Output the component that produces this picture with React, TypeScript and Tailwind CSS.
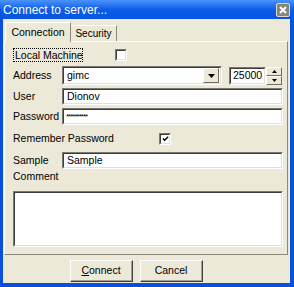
const FONT = { fontFamily: '"Liberation Sans", Arial, sans-serif' };

function Sunken({ className = '', children }: { className?: string; children?: React.ReactNode }) {
  return (
    <div className={`border-t border-l border-[#7a7870] border-b border-r border-b-white border-r-white ${className}`}>
      <div className="w-full h-full bg-white border-t border-l border-[#3c3c38] border-b border-r border-b-[#e4e1d4] border-r-[#e4e1d4] flex items-center overflow-hidden">
        {children}
      </div>
    </div>
  );
}

function Check({ checked = false }: { checked?: boolean }) {
  return (
    <Sunken className="w-[12px] h-[12px]">
      {checked && (
        <svg width="8" height="8" viewBox="0 0 8 8" className="ml-[1px]">
          <path d="M1 3.5 L3 5.5 L7 1.5" stroke="#000" strokeWidth="1.6" fill="none" />
        </svg>
      )}
    </Sunken>
  );
}

function Button({ children }: { children: React.ReactNode }) {
  return (
    <div className="w-[63px] h-[22px] border border-t-white border-l-white border-b-[#404040] border-r-[#404040] bg-[#ece9d8]">
      <div className="w-full h-full border-b border-r border-[#a09d92] flex items-center justify-center text-[10.5px] text-black">
        {children}
      </div>
    </div>
  );
}

export default function App() {
  return (
    <div style={FONT} className="w-[294px] h-[287px] bg-[#0a50dc] flex flex-col overflow-hidden whitespace-nowrap">
      <div className="h-[19px] flex items-center justify-between bg-gradient-to-b from-[#4a93fb] via-[#0b5ce8] to-[#0754e0]">
        <span className="pl-[3px] text-white text-[12px] leading-none">Connect to server...</span>
        <div className="mr-[4px] w-[14px] h-[14px] bg-[#86857a] border border-[#dcdad0] rounded-[2px] flex items-center justify-center">
          <svg width="8" height="8" viewBox="0 0 8 8">
            <path d="M1 1 L7 7 M7 1 L1 7" stroke="#ffffff" strokeWidth="2" />
          </svg>
        </div>
      </div>

      <div className="ml-[3px] mr-[4px] flex-1 bg-[#ece9d8] flex flex-col">
        <div className="flex items-end mt-[3px] ml-[2px] relative z-10">
          <div className="w-[66px] h-[20px] bg-[#ece9d8] border-t border-l border-white border-r border-r-[#8a877c] -mb-px flex items-center justify-center text-[10.5px] text-black">
            Connection
          </div>
          <div className="w-[46px] h-[16px] border-t border-white border-r border-r-[#8a877c] flex items-center justify-center text-[10px] text-black">
            Security
          </div>
        </div>

        <div className="ml-[1px] w-[284px] h-[214px] border-t border-l border-white border-r border-b border-r-[#8a877c] border-b-[#8a877c] pl-[8px] pr-[4px] flex flex-col text-[10.5px] text-black">
          <div className="mt-[6px] h-[14px] flex items-center">
            <span className="w-[70px] h-[14px] border border-dotted border-black flex items-center pl-px leading-none">Local Machine</span>
            <div className="ml-[32px]"><Check /></div>
          </div>

          <div className="mt-[4px] h-[19px] flex items-center">
            <span className="w-[49px]">Address</span>
            <Sunken className="w-[160px] h-[19px]">
              <span className="flex-1 pl-[3px]">gimc</span>
              <div className="w-[16px] h-[15px] mr-px bg-[#ece9d8] border border-t-white border-l-white border-b-[#716f64] border-r-[#716f64] flex items-center justify-center">
                <svg width="7" height="4" viewBox="0 0 7 4"><path d="M0 0 H7 L3.5 4 Z" fill="#000" /></svg>
              </div>
            </Sunken>
            <Sunken className="ml-[7px] w-[37px] h-[18px]">
              <span className="pl-[2px]">25000</span>
            </Sunken>
            <div className="w-[16px] h-[18px] flex flex-col">
              {[0, 1].map(i => (
                <div key={i} className="flex-1 bg-[#ece9d8] border border-t-white border-l-white border-b-[#716f64] border-r-[#716f64] flex items-center justify-center">
                  <svg width="5" height="3" viewBox="0 0 5 3">
                    <path d={i === 0 ? 'M0 3 H5 L2.5 0 Z' : 'M0 0 H5 L2.5 3 Z'} fill="#000" />
                  </svg>
                </div>
              ))}
            </div>
          </div>

          <div className="mt-[3px] h-[17px] flex items-center">
            <span className="w-[49px]">User</span>
            <Sunken className="w-[221px] h-[17px]"><span className="pl-[3px]">Dionov</span></Sunken>
          </div>

          <div className="mt-[3px] h-[17px] flex items-center">
            <span className="w-[49px]">Password</span>
            <Sunken className="w-[221px] h-[17px]"><span className="pl-[2px] text-[8px] tracking-[-1px]">**********</span></Sunken>
          </div>

          <div className="mt-[7px] h-[13px] flex items-center">
            <span className="w-[146px]">Remember Password</span>
            <Check checked />
          </div>

          <div className="mt-[7px] h-[17px] flex items-center">
            <span className="w-[49px]">Sample</span>
            <Sunken className="w-[221px] h-[17px]"><span className="pl-[3px]">Sample</span></Sunken>
          </div>

          <div className="mt-[2px] h-[12px] flex items-center">
            <span>Comment</span>
          </div>

          <Sunken className="mt-[8px] w-[270px] h-[56px]" />
        </div>

        <div className="mt-[5px] ml-[67px] flex gap-[7px]">
          <Button><span><span className="underline">C</span>onnect</span></Button>
          <Button>Cancel</Button>
        </div>
      </div>
      <div className="h-[4px]" />
    </div>
  );
}
